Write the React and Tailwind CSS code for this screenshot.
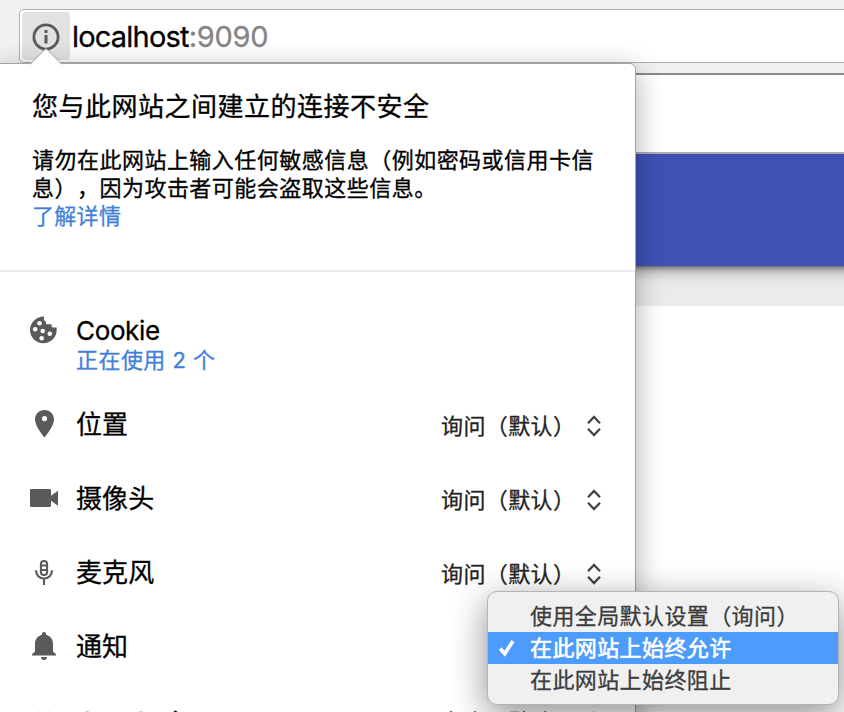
const CJK = "font-['Inter','Noto_Sans_CJK_SC',sans-serif] [text-spacing-trim:space-all]";

function InfoIcon() {
  return (
    <svg width="28" height="28" viewBox="0 0 28 28" fill="none">
      <circle cx="14" cy="14" r="12.1" stroke="#5a5a5a" strokeWidth="2.8" />
      <path d="M12.500 7h3v3h-3zM12.500 12h3v8.500h-3z" fill="#5a5a5a" />
    </svg>
  );
}

function CookieIcon() {
  return (
    <svg width="28" height="28" viewBox="0 0 28 28">
      <path
        d="M14 .5C6.500 .5 0 6.500 0 14S6.200 27.300 13.300 27.300 26.700 21.500 26.700 14c0-.9 0-1.200-.1-2.500h-3.300c-1.200 0-1.800-.6-1.800-1.700V8.300h-3.700c-1.300 0-2-.7-2-1.900V5.200c-1.300-.2-1.800-.9-1.800-2.200z"
        fill="#5a5a5a"
      />
      <g fill="#fff">
        <circle cx="9.500" cy="7.200" r="2.300" />
        <circle cx="5.200" cy="13.300" r="2.300" />
        <circle cx="12.700" cy="15" r="2.300" />
        <circle cx="19.800" cy="17.800" r="2.300" />
        <circle cx="11.700" cy="22.300" r="2.300" />
      </g>
    </svg>
  );
}

function LocationIcon() {
  return (
    <svg width="28" height="28" viewBox="0 0 28 28" className="relative -top-px">
      <path
        fillRule="evenodd"
        d="M14.500 0C9.200 0 5 4.100 5 9.300 5 16.500 14.500 27.500 14.500 27.500S24 16.500 24 9.300C24 4.100 19.800 0 14.500 0zm0 6a2.600 2.600 0 1 1 0 5.200 2.600 2.600 0 0 1 0-5.200z"
        fill="#5a5a5a"
      />
    </svg>
  );
}

function CameraIcon() {
  return (
    <svg width="28" height="28" viewBox="0 0 28 28">
      <path
        d="M1.500 4h18c.9 0 1.500.6 1.500 1.500v5.200l7-5v15l-7-5v4.800c0 .9-.6 1.500-1.500 1.500h-18C.6 22 0 21.400 0 20.500v-15C0 4.600.6 4 1.500 4z"
        fill="#5a5a5a"
      />
    </svg>
  );
}

function MicIcon() {
  return (
    <svg width="28" height="28" viewBox="0 0 28 28" fill="none" stroke="#5a5a5a">
      <rect x="10.900" y="1.900" width="6.200" height="14" rx="3" strokeWidth="2" />
      <path d="M11 6.500h6M11 11h6" strokeWidth="1.900" />
      <path d="M6 11.200c0 5 3.500 8.300 8 8.300s8-3.300 8-8.300M14 19.500V26" strokeWidth="2.100" />
    </svg>
  );
}

function BellIcon() {
  return (
    <svg width="28" height="28" viewBox="0 0 28 28" overflow="visible">
      <path
        d="M14 -1c-1.200 0-2 .8-2 2v.8C8 2.700 5 6.200 5 10.500V18.500L2 21.200V22.500h24v-1.300L23 18.500V10.500c0-4.300-3-7.800-7-8.700V1c0-1.200-.8-2-2-2zM11 24h6c0 1.700-1.300 3-3 3s-3-1.300-3-3z"
        fill="#5a5a5a"
      />
    </svg>
  );
}

function CodeIcon() {
  return (
    <svg width="28" height="28" viewBox="0 0 28 28" fill="none" stroke="#5a5a5a" strokeWidth="2.500">
      <path d="M10 5.500 2 13.500l8 8M18 5.500l8 8-8 8" />
    </svg>
  );
}

function SelectArrows() {
  return (
    <svg className="relative top-px" width="14" height="22" viewBox="0 0 14 22" fill="none" stroke="#444" strokeWidth="2.300">
      <path d="M1 8.200 7 2l6 6.200M1 13.800 7 20l6-6.200" />
    </svg>
  );
}

function Permission({ icon, label, value }) {
  return (
    <div className="flex h-[74px] items-center pl-[30px] pr-[34px]">
      <span className="w-[46px] shrink-0">{icon}</span>
      <span className="text-[26px] leading-[30px] tracking-[0.1px] text-black">{label}</span>
      {value && (
        <span className="ml-auto flex items-center">
          <span className="w-[146px] whitespace-nowrap pt-0.5 text-[22px] leading-[30px] tracking-[0.4px] text-[#222]">{value}</span>
          <SelectArrows />
        </span>
      )}
    </div>
  );
}

function SiteInfoPopup() {
  return (
    <section className="absolute -left-px top-[63px] h-[700px] w-[637px] rounded-tr-[6px] border border-[#a2a2a2] bg-white shadow-[0_6px_28px_rgba(0,0,0,0.32)] [-webkit-text-stroke:0.3px_currentColor]">
      <svg className="absolute left-[28.500px] -top-[17px]" width="34" height="18" viewBox="0 0 34 18">
        <path d="M1 17.500 17 1.500l16 16" fill="#fff" stroke="#a2a2a2" />
        <path d="M2 17h30v1H2z" fill="#fff" />
      </svg>
      <header className="h-[208px] border-b-2 border-[#ebebeb] pl-8 pt-[25px] text-black">
        <h1 className="text-[26px] leading-[36px] tracking-[0.500px]">您与此网站之间建立的连接不安全</h1>
        <p className="mt-[21px] text-[22px] leading-7 tracking-[0.480px]">
          请勿在此网站上输入任何敏感信息（例如密码或信用卡信
          <br />
          息），因为攻击者可能会盗取这些信息。
        </p>
        <a className="block text-[22px] leading-7 tracking-[0.300px] text-[#427fd9]">了解详情</a>
      </header>
      <div className="flex h-[116px] items-start pl-[30px] pt-[44px]">
        <span className="w-[46px] shrink-0"><CookieIcon /></span>
        <div>
          <div className="text-[26px] leading-[30px] tracking-[-0.350px] text-black">Cookie</div>
          <div className="-mt-px text-[22px] leading-[30px] tracking-[0.450px] text-[#427fd9]">正在使用 2 个</div>
        </div>
      </div>
      <Permission icon={<LocationIcon />} label="位置" value="询问（默认）" />
      <Permission icon={<CameraIcon />} label="摄像头" value="询问（默认）" />
      <Permission icon={<MicIcon />} label="麦克风" value="询问（默认）" />
      <Permission icon={<BellIcon />} label="通知" />
      <Permission icon={<CodeIcon />} label={<span className="relative top-px tracking-[-0.500px]">JavaScript</span>} value="允许（默认）" />
    </section>
  );
}

function PermissionMenu() {
  return (
    <div className="absolute left-[487px] top-[591px] h-[114px] w-[352px] rounded-[10px] border border-[#b4b4b4] bg-[#f0f0f0] pt-2 text-[22px] tracking-[0.400px] text-[#3c3c3c] shadow-[0_10px_36px_rgba(0,0,0,0.45)] [-webkit-text-stroke:0.3px_currentColor]">
      <div className="flex h-8 items-center pl-[42px]">使用全局默认设置（询问）</div>
      <div className="flex h-8 items-center bg-[#4d9bfa] text-white [-webkit-text-stroke:0.6px_currentColor]">
        <span className="w-[42px] pl-[11px]">
          <svg width="16" height="18" viewBox="0 0 16 18" fill="none" stroke="#fff" strokeWidth="3.700">
            <path d="m1.200 9.500 4.500 5.200L14 2" />
          </svg>
        </span>
        在此网站上始终允许
      </div>
      <div className="flex h-8 items-center pl-[42px]">在此网站上始终阻止</div>
    </div>
  );
}

export default function App() {
  return (
    <div lang="zh-CN" className={`relative h-[712px] w-[844px] overflow-hidden bg-white ${CJK}`}>
      <div className="h-[73px] bg-[#f1f1f1] pl-[19px] pt-[9px]">
        <div className="flex h-[54px] w-[840px] items-start rounded-[5px] border border-[#b0b0b0] bg-white pl-0.5 pt-0.5">
          <div className="flex size-12 items-start rounded-[4px] bg-[#e2e2e2] pl-[10px] pt-[10.500px]"><InfoIcon /></div>
          <div className="pl-[2px] pt-[5px] text-[29px] leading-[40px] tracking-[-0.800px] text-black [-webkit-text-stroke:0.3px_currentColor]">
            localhost<span className="tracking-[-0.250px] text-[#858585]">:9090</span>
          </div>
        </div>
      </div>
      <div className="h-[81px] border-b-2 border-t-2 border-b-[#adadad] border-t-[#8a8a8a] bg-white" />
      <div className="relative h-[112px] w-[900px] bg-[#3f51b5] shadow-[0_3px_14px_rgba(0,0,0,0.500),0_1px_4px_rgba(0,0,0,0.400)] [clip-path:inset(0_0_-39px_0)]" />
      <div className="h-10 bg-[#ebebeb]" />
      <div className="h-[406px] bg-white" />
      <SiteInfoPopup />
      <PermissionMenu />
    </div>
  );
}
